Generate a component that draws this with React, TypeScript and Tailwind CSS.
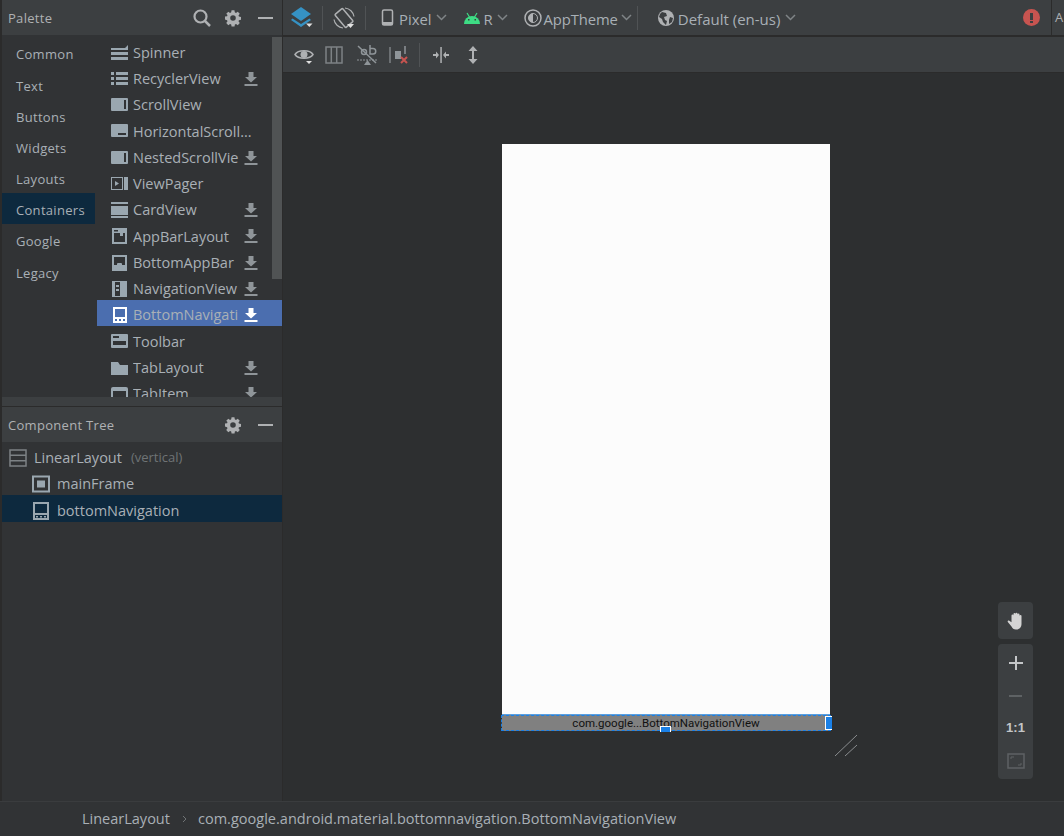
import type { ReactNode } from 'react'

const ICON = '#9aa7b0'

function Svg({ size = 18, className = '', children }: { size?: number; className?: string; children: ReactNode }) {
  return (
    <svg width={size} height={size} viewBox="0 0 18 18" fill="none" className={`shrink-0 ${className}`}>
      {children}
    </svg>
  )
}

function DownloadIcon({ white }: { white?: boolean }) {
  const c = white ? '#ffffff' : '#8f9599'
  return (
    <svg width="14" height="16" viewBox="0 0 14 16" className="shrink-0">
      <path d="M4.5 1h5v5H13L7 11.5 1 6h3.5z" fill={c} />
      <rect x="0.5" y="13" width="13" height="2" fill={c} />
    </svg>
  )
}

const paletteIcons: Record<string, ReactNode> = {
  Spinner: (
    <>
      <path d="M1 4h14l3-3v5H1z" fill={ICON} />
      <rect x="1" y="8" width="17" height="3" fill={ICON} />
      <rect x="1" y="13" width="17" height="3" fill={ICON} />
    </>
  ),
  RecyclerView: (
    <>
      <rect x="1" y="2" width="3" height="3" fill={ICON} />
      <rect x="1" y="7" width="3" height="3" fill={ICON} />
      <rect x="1" y="12" width="3" height="3" fill={ICON} />
      <rect x="6" y="2" width="12" height="3" fill={ICON} />
      <rect x="6" y="7" width="12" height="3" fill={ICON} />
      <rect x="6" y="12" width="12" height="3" fill={ICON} />
    </>
  ),
  ScrollView: (
    <>
      <rect x="1" y="2" width="17" height="13" rx="1" fill={ICON} />
      <rect x="14" y="4" width="2" height="9" fill="#313335" />
    </>
  ),
  HorizontalScroll: (
    <>
      <rect x="1" y="2" width="17" height="13" rx="1" fill={ICON} />
      <rect x="8" y="11" width="8" height="2" fill="#313335" />
    </>
  ),
  ViewPager: (
    <>
      <rect x="1.500" y="2.500" width="11" height="12" stroke={ICON} />
      <path d="M5 6l4 2.500L5 11z" fill={ICON} />
      <rect x="14" y="2" width="4" height="13" fill={ICON} />
    </>
  ),
  CardView: (
    <>
      <rect x="1" y="1" width="17" height="2" fill={ICON} />
      <rect x="1" y="5" width="17" height="9" fill={ICON} />
      <rect x="1" y="15" width="17" height="2" fill={ICON} />
    </>
  ),
  AppBarLayout: (
    <>
      <rect x="2" y="1" width="15" height="16" fill={ICON} />
      <rect x="4" y="6" width="11" height="9" fill="#313335" />
      <rect x="10" y="6" width="3" height="3" fill={ICON} />
      <rect x="4" y="3" width="4" height="1.500" fill="#313335" />
    </>
  ),
  BottomAppBar: (
    <>
      <rect x="2" y="1" width="15" height="16" fill={ICON} />
      <rect x="4" y="3" width="11" height="8" fill="#313335" />
      <rect x="7" y="9" width="5" height="3" rx="1" fill={ICON} />
    </>
  ),
  NavigationView: (
    <>
      <rect x="2.500" y="1.500" width="14" height="15" stroke={ICON} strokeWidth="1" />
      <rect x="3" y="2" width="2" height="14" fill={ICON} />
      <rect x="10" y="2" width="6" height="14" fill={ICON} />
      <rect x="6" y="5" width="3" height="2" fill={ICON} />
      <rect x="6" y="9" width="3" height="2" fill={ICON} />
    </>
  ),
  BottomNavigation: (
    <>
      <rect x="3" y="1" width="14" height="16" fill="#ffffff" />
      <rect x="5" y="3" width="10" height="8" fill="#4b6eaf" />
      <rect x="5" y="13" width="2" height="2" fill="#4b6eaf" />
      <rect x="9" y="13" width="2" height="2" fill="#4b6eaf" />
      <rect x="13" y="13" width="2" height="2" fill="#4b6eaf" />
    </>
  ),
  Toolbar: (
    <>
      <rect x="1" y="2" width="17" height="14" rx="1" fill={ICON} />
      <rect x="3" y="9" width="13" height="4" fill="#313335" />
      <rect x="3" y="4" width="6" height="2" fill="#313335" />
    </>
  ),
  TabLayout: <path d="M1 3h7l2 3h8v10H1z" fill={ICON} />,
  TabItem: (
    <>
      <rect x="1" y="2" width="17" height="14" rx="2" fill={ICON} />
      <rect x="3" y="6" width="13" height="10" fill="#313335" />
    </>
  ),
}

const paletteItems = [
  { name: 'Spinner', icon: 'Spinner' },
  { name: 'RecyclerView', icon: 'RecyclerView', dl: true },
  { name: 'ScrollView', icon: 'ScrollView' },
  { name: 'HorizontalScroll...', icon: 'HorizontalScroll' },
  { name: 'NestedScrollVie', icon: 'ScrollView', dl: true },
  { name: 'ViewPager', icon: 'ViewPager' },
  { name: 'CardView', icon: 'CardView', dl: true },
  { name: 'AppBarLayout', icon: 'AppBarLayout', dl: true },
  { name: 'BottomAppBar', icon: 'BottomAppBar', dl: true },
  { name: 'NavigationView', icon: 'NavigationView', dl: true },
  { name: 'BottomNavigati', icon: 'BottomNavigation', dl: true, selected: true },
  { name: 'Toolbar', icon: 'Toolbar' },
  { name: 'TabLayout', icon: 'TabLayout', dl: true },
  { name: 'TabItem', icon: 'TabItem', dl: true },
]

const categories = ['Common', 'Text', 'Buttons', 'Widgets', 'Layouts', 'Containers', 'Google', 'Legacy']

function GearIcon() {
  return (
    <svg width="18" height="18" viewBox="0 0 18 18" className="shrink-0">
      <path
        fillRule="evenodd"
        d="M7.4 1h3.2l.4 2.3 1.3.6L14.300 2.500l2.200 2.300-1.400 1.900.5 1.300 2.300.4v3.200l-2.300.4-.5 1.300 1.400 1.900-2.200 2.300-1.900-1.400-1.300.6-.4 2.200H7.400l-.4-2.200-1.300-.6-1.900 1.400-2.300-2.300 1.400-1.900-.5-1.300L.1 11.200V8l2.300-.4.5-1.300L1.500 4.800l2.300-2.300 1.900 1.400 1.300-.6zM9 6.400a3.100 3.100 0 100 6.200 3.100 3.100 0 000-6.200z"
        fill="#afb1b3"
        transform="translate(.9 .4) scale(.9)"
      />
    </svg>
  )
}

function PanelHeader({ title, search }: { title: string; search?: boolean }) {
  return (
    <div className="flex h-[35px] shrink-0 items-center bg-[#3c3f41] pl-[6px] pr-[9px]">
      <span className="flex-1 pt-[3px] text-[13px] tracking-[0.3px] text-[#afb1b3]">{title}</span>
      {search && (
        <svg width="20" height="20" viewBox="0 0 20 20" fill="none" className="mr-[12px]">
          <circle cx="8.500" cy="8.500" r="6" stroke="#afb1b3" strokeWidth="2.200" />
          <path d="M13 13l5 5" stroke="#afb1b3" strokeWidth="2.500" />
        </svg>
      )}
      <GearIcon />
      <span className="ml-[16px] h-[2px] w-[15px] bg-[#afb1b3]" />
    </div>
  )
}

function Chevron() {
  return (
    <svg width="11" height="7" viewBox="0 0 11 7" fill="none" className="shrink-0">
      <path d="M1 1l4.500 4.500L10 1" stroke="#7f8487" strokeWidth="1.500" />
    </svg>
  )
}

function Sep() {
  return <span className="block h-[24px] w-px shrink-0 bg-[#505355]" />
}

function TopBar() {
  return (
    <div className="flex h-[35px] shrink-0 items-center bg-[#3c3f41] pl-[8px] text-[14.800px] text-[#a9b0b6]">
      <svg width="22" height="23" viewBox="0 0 22 23" className="shrink-0">
        <path d="M10 1l10 7-10 7L0 8z" fill="#3592c4" />
        <path d="M1.500 12.500L10 18l8.500-5.500 1.500 1.500-10 7-10-7z" fill="#3592c4" />
        <path d="M15 17.500h6.500l-3.200 3.500z" fill="#e0e0e0" />
      </svg>
      <span className="ml-[9px]"><Sep /></span>
      <svg width="24" height="24" viewBox="0 0 24 24" fill="none" className="ml-[9px] shrink-0">
        <rect x="7" y="3.500" width="10" height="17" rx="1" transform="rotate(-40 12 12)" stroke="#afb1b3" strokeWidth="1.500" />
        <path d="M13 2a10 10 0 019 8.500M11 22a10 10 0 01-9-8.500" stroke="#afb1b3" strokeWidth="1.200" />
        <path d="M15 18h7l-3.500 4z" fill="#e0e0e0" />
      </svg>
      <span className="ml-[9px]"><Sep /></span>
      <svg width="13" height="18" viewBox="0 0 13 18" fill="none" className="ml-[15px] shrink-0">
        <rect x="1.500" y="1" width="10" height="15" rx="1.500" stroke="#afb1b3" strokeWidth="1.500" />
        <rect x="1.500" y="13" width="10" height="3" fill="#afb1b3" />
      </svg>
      <span className="ml-[5px] pt-[3px]">Pixel</span>
      <span className="ml-[5px]"><Chevron /></span>
      <svg width="18" height="12" viewBox="0 0 18 12" className="ml-[16px] shrink-0">
        <path d="M1 12a8 8 0 0116 0z" fill="#3ddc84" />
        <path d="M4 1l2.500 4M14 1l-2.500 4" stroke="#3ddc84" strokeWidth="1.200" />
        <rect x="5" y="7" width="1.500" height="1.500" fill="#3c3f41" />
        <rect x="11.500" y="7" width="1.500" height="1.500" fill="#3c3f41" />
      </svg>
      <span className="ml-[2px] pt-[3px]">R</span>
      <span className="ml-[4px]"><Chevron /></span>
      <svg width="20" height="20" viewBox="0 0 20 20" fill="none" className="ml-[15px] shrink-0">
        <circle cx="10" cy="10" r="8" stroke="#afb1b3" strokeWidth="1.500" />
        <circle cx="10" cy="10" r="4.500" stroke="#afb1b3" />
        <path d="M10 5.500a4.500 4.500 0 000 9z" fill="#afb1b3" />
      </svg>
      <span className="ml-[1px] pt-[3px] tracking-[-0.1px]">AppTheme</span>
      <span className="ml-[3px] mr-[5px]"><Chevron /></span>
      <Sep />
      <svg width="18" height="18" viewBox="0 0 18 18" className="ml-[19px] shrink-0">
        <circle cx="9" cy="9" r="8" fill="#afb1b3" />
        <path d="M5 3l4 1 1 3-3 1 1 3 2 1-1 4-3-3-1-3-3-2 1-3zM13 8l3 1-1 4-3 2 0-4z" fill="#3c3f41" />
      </svg>
      <span className="ml-[3px] pt-[3px] text-[15px]">Default (en-us)</span>
      <span className="ml-[5px]"><Chevron /></span>
      <span className="flex-1" />
      <span className="mr-[11px] flex h-[17px] w-[17px] flex-col items-center justify-center gap-[1px] rounded-full bg-[#c75450]">
        <span className="h-[7px] w-[3px] bg-[#3c3f41]" />
        <span className="h-[2px] w-[3px] bg-[#3c3f41]" />
      </span>
      <span className="h-full w-px bg-[#2b2b2b]" />
      <span className="w-[12px] overflow-hidden pl-[3px] text-[13px] text-[#afb1b3]">A</span>
    </div>
  )
}

function SecondBar() {
  return (
    <div className="flex h-[35px] shrink-0 items-center bg-[#3c3f41] pl-[11px]">
      <svg width="20" height="20" viewBox="0 0 20 20" fill="none" className="shrink-0">
        <path d="M1 9.500C4 4.500 16 4.500 19 9.500 16 14.500 4 14.500 1 9.500z" stroke="#afb1b3" strokeWidth="1.500" />
        <circle cx="10" cy="9.500" r="3.500" fill="#afb1b3" />
        <path d="M12 16h6l-3 3z" fill="#e0e0e0" />
      </svg>
      <svg width="18" height="18" viewBox="0 0 18 18" fill="none" className="ml-[11px] shrink-0">
        <rect x="1" y="1" width="16" height="16" stroke="#7d8285" strokeWidth="1.500" />
        <path d="M6.300 1v16M11.700 1v16" stroke="#7d8285" strokeWidth="1.500" />
      </svg>
      <svg width="22" height="22" viewBox="0 0 22 22" fill="none" className="ml-[13px] shrink-0">
        <path d="M2 2l18 17" stroke="#8f9599" strokeWidth="1.500" />
        <path d="M14 1v9h3a2.500 2.500 0 000-5.500h-3" stroke="#8f9599" strokeWidth="1.500" />
        <circle cx="8" cy="8" r="2.500" stroke="#8f9599" strokeWidth="1.500" />
        <path d="M1 16h20" stroke="#8f9599" strokeDasharray="2 1" />
        <path d="M8 21h7l-3.500-5z" fill="#8f9599" />
      </svg>
      <svg width="22" height="20" viewBox="0 0 22 20" fill="none" className="ml-[11px] shrink-0">
        <path d="M1 2v16" stroke="#7d8285" strokeWidth="1.500" />
        <rect x="6" y="6" width="6" height="8" fill="#8f9599" />
        <path d="M16 1v8" stroke="#8f9599" strokeWidth="1.500" />
        <path d="M12 12l6 6M18 12l-6 6" stroke="#c75450" strokeWidth="2" />
      </svg>
      <span className="ml-[8px]"><Sep /></span>
      <svg width="18" height="18" viewBox="0 0 18 18" className="ml-[12px] shrink-0">
        <rect x="8.300" y="1" width="1.500" height="16" fill="#afb1b3" />
        <path d="M1 8h3V5.500L7 9l-3 3.500V10H1zM17 8h-3V5.500L11 9l3 3.500V10h3z" fill="#afb1b3" />
      </svg>
      <svg width="14" height="18" viewBox="0 0 14 18" className="ml-[16px] shrink-0">
        <path d="M7 0l4.500 5H8v8h3.500L7 18l-4.500-5H6V5H2.500z" fill="#afb1b3" />
      </svg>
    </div>
  )
}

function Handle({ className }: { className: string }) {
  return <span className={`absolute border border-white bg-[#1a80e6] ${className}`} />
}

function DeviceCanvas() {
  return (
    <div className="relative flex flex-1 justify-start bg-[#2d2f30] pl-[219px] pt-[71px]">
      <div className="relative flex h-[587px] w-[328px] flex-col bg-[#fcfcfc]">
        <div className="flex-1" />
        <div className="relative flex h-[16px] items-center justify-center bg-[#808080] pt-[2px] text-[11.500px] text-[#111111] [font-family:Roboto,sans-serif]">
          <span className="absolute inset-x-0 top-[-1px] border-t border-[#5a9fe0]" />
          <span className="absolute -inset-x-px inset-y-0 border border-dashed border-[#1a80e6]" />
          com.google...BottomNavigationView
          <Handle className="bottom-[-1px] left-[158px] h-[6px] w-[11px] border-b-0" />
          <Handle className="right-[-2px] top-[1px] h-[14px] w-[7px] border-r-0" />
        </div>
      </div>

      {/* resize grip */}
      <svg width="24" height="24" viewBox="0 0 24 24" fill="none" className="absolute left-[551px] top-[661px]">
        <path d="M1 22L23 1M11 22L23 11" stroke="#8a8d8f" />
      </svg>

      {/* zoom controls */}
      <div className="absolute left-[715px] top-[529px] flex w-[35px] flex-col gap-[5px]">
        <div className="flex h-[37px] items-center justify-center rounded-[4px] bg-[#3c3f41]">
          <svg width="18" height="18" viewBox="0 0 18 18">
            <path d="M4.500 3.500a1 1 0 012 0V2a1 1 0 012 0v-.200a1 1 0 012 0V2.500a1 1 0 012 0V4a1 1 0 012 0v8c0 3-2 5.500-5 5.500H9c-2.500 0-3.500-1-4.500-3L.8 10c-.5-.8.5-1.800 1.500-1.300l2.200 1.500z" fill="#d4d4d4" />
          </svg>
        </div>
        <div className="flex h-[135px] flex-col items-center rounded-[4px] bg-[#3c3f41] pt-[12px]">
          <span className="relative h-[14px] w-[14px]">
            <span className="absolute left-0 top-[6px] h-[2px] w-[14px] bg-[#c4c6c8]" />
            <span className="absolute left-[6px] top-0 h-[14px] w-[2px] bg-[#c4c6c8]" />
          </span>
          <span className="mt-[25px] h-[2px] w-[13px] bg-[#5e6264]" />
          <span className="mt-[24px] text-[13px] font-bold leading-[14px] text-[#c4c6c8] [font-family:'Liberation_Sans',sans-serif]">1:1</span>
          <svg width="18" height="16" viewBox="0 0 18 16" fill="none" className="mt-[18px]">
            <rect x="1" y="1" width="16" height="14" stroke="#5e6264" strokeWidth="1.500" />
            <path d="M4 4h3M4 4v2M14 12h-3M14 12v-2" stroke="#5e6264" />
          </svg>
        </div>
      </div>
    </div>
  )
}

export default function App() {
  return (
    <div className="flex h-[836px] w-[1064px] flex-col overflow-hidden bg-[#2d2f30] [font-family:'Open_Sans','Noto_Sans',sans-serif]">
      <div className="flex min-h-0 flex-1">
        {/* Left column */}
        <div className="flex w-[283px] shrink-0 flex-col border-l-2 border-r border-l-[#2b2b2b] border-r-[#2b2b2b] bg-[#313335]">
          <PanelHeader title="Palette" search />
          <div className="flex h-[362px] shrink-0 overflow-hidden">
            <div className="flex w-[93px] shrink-0 flex-col pt-[2px]">
              {categories.map(c => (
                <div
                  key={c}
                  className={`flex h-[31.200px] shrink-0 items-center pl-[14px] pt-[5px] text-[13px] tracking-[0.3px] text-[#a9b0b6] ${
                    c === 'Containers' ? 'bg-[#0d293e]' : ''
                  }`}
                >
                  {c}
                </div>
              ))}
            </div>
            <div className="ml-[2px] flex flex-1 flex-col overflow-hidden pt-[2.500px]">
              {paletteItems.map(item => (
                <div
                  key={item.name}
                  className={`flex h-[26.250px] shrink-0 items-center pl-[13px] pt-[4px] ${item.selected ? 'bg-[#4b6eaf]' : ''}`}
                >
                  <Svg className="mr-[5px]">{paletteIcons[item.icon]}</Svg>
                  <span className={`whitespace-nowrap text-[14.500px] text-[#a9b0b6] ${item.dl ? 'w-[108px] overflow-hidden' : ''}`}>
                    {item.name}
                  </span>
                  {item.dl && (
                    <span className="ml-[3px]">
                      <DownloadIcon white={item.selected} />
                    </span>
                  )}
                </div>
              ))}
            </div>
            <div className="-ml-[12px] mt-[2px] h-[242px] w-[10px] shrink-0 bg-[#505354]" />
          </div>
          <div className="h-[9px] shrink-0 bg-[#3c3f41]" />
          <div className="h-px shrink-0 bg-[#2b2b2b]" />
          <PanelHeader title="Component Tree" />
          <div className="flex flex-col text-[14.500px] text-[#a9b0b6]">
            <div className="flex h-[26.500px] items-center pl-[7px] pt-[5px]">
              <svg width="18" height="18" viewBox="0 0 18 18" fill="none">
                <rect x="1" y="1" width="16" height="16" stroke="#7d8285" strokeWidth="1.500" />
                <path d="M1 6.300h16M1 11.700h16" stroke="#7d8285" strokeWidth="1.500" />
              </svg>
              <span className="ml-[7px]">LinearLayout</span>
              <span className="ml-[9px] text-[13px] text-[#6f7375]">(vertical)</span>
            </div>
            <div className="flex h-[26.500px] items-center pl-[30px] pt-[5px]">
              <svg width="18" height="18" viewBox="0 0 18 18" fill="none">
                <rect x="1" y="1.500" width="16" height="15" stroke={ICON} strokeWidth="2" />
                <rect x="5" y="5.500" width="8" height="7" fill={ICON} />
              </svg>
              <span className="ml-[7px]">mainFrame</span>
            </div>
            <div className="flex h-[27px] items-center bg-[#0d293e] pl-[31px] pt-[5px]">
              <svg width="16" height="18" viewBox="0 0 16 18" fill="none">
                <rect x="1" y="1" width="14" height="16" stroke={ICON} strokeWidth="2" />
                <rect x="1" y="11" width="14" height="2" fill={ICON} />
                <rect x="3" y="14" width="2" height="1.500" fill={ICON} />
                <rect x="7" y="14" width="2" height="1.500" fill={ICON} />
                <rect x="11" y="14" width="2" height="1.500" fill={ICON} />
              </svg>
              <span className="ml-[8px]">bottomNavigation</span>
            </div>
          </div>
        </div>

        {/* Editor */}
        <div className="flex min-w-0 flex-1 flex-col">
          <TopBar />
          <div className="h-[2px] shrink-0 bg-[#2b2b2b]" />
          <SecondBar />
          <div className="h-px shrink-0 bg-[#2b2b2b]" />
          <DeviceCanvas />
        </div>
      </div>

      {/* Breadcrumb */}
      <div className="flex h-[35px] shrink-0 items-center border-t border-[#3a3c3e] bg-[#313335] pl-[82px] text-[14.500px] text-[#a9b0b6]">
        <span>LinearLayout</span>
        <svg width="6" height="8" viewBox="0 0 6 8" fill="none" className="ml-[12px] mr-[10px]">
          <path d="M1 1l3 3-3 3" stroke="#6f7375" />
        </svg>
        <span className="tracking-[0.02px]">com.google.android.material.bottomnavigation.BottomNavigationView</span>
      </div>
    </div>
  )
}
